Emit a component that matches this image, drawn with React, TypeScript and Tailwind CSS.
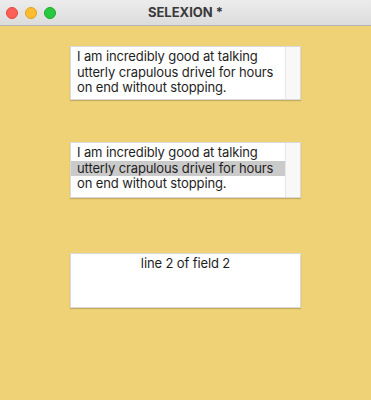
import React from "react";

const font = { fontFamily: "Inter, 'Noto Sans', sans-serif" };

function Field({
  lines,
  highlight,
  scroll,
  center,
  h,
}: {
  lines: string[];
  highlight?: number;
  scroll?: boolean;
  center?: boolean;
  h: string;
}) {
  return (
    <div
      className={`ml-[70px] w-[231px] ${h} bg-white border border-[#d9d9d9] shadow-[0_1px_1px_rgba(0,0,0,0.18)] flex`}
    >
      <div className="flex-1 pt-[2px] flex flex-col">
        {lines.map((l, i) => (
          <div
            key={i}
            className={`h-[15.5px] leading-[15.5px] text-[13px] tracking-[-0.12px] text-[#1e1e1e] whitespace-nowrap ${
              center ? "text-center" : "pl-[6px]"
            } ${highlight === i ? "bg-[#cacaca]" : ""}`}
          >
            {l}
          </div>
        ))}
      </div>
      {scroll && <div className="w-[15px] h-full bg-[#f8f8f8] border-l border-[#e6e6e6]" />}
    </div>
  );
}

export default function App() {
  const text = [
    "I am incredibly good at talking",
    "utterly crapulous drivel for hours",
    "on end without stopping.",
  ];
  return (
    <div className="w-[371px] h-[400px] bg-[#f0d276] flex flex-col overflow-hidden" style={font}>
      <div className="h-[26px] shrink-0 bg-gradient-to-b from-[#ececec] to-[#dcdcdc] border-b border-[#b4b4b4] flex items-center relative">
        <div className="flex items-center gap-[7px] pl-[6px]">
          <div className="w-[12px] h-[12px] rounded-full bg-[#fe5f57] border border-[#e2463f]" />
          <div className="w-[12px] h-[12px] rounded-full bg-[#febc2e] border border-[#dea123]" />
          <div className="w-[12px] h-[12px] rounded-full bg-[#28c840] border border-[#1aab29]" />
        </div>
        <div className="absolute inset-0 flex items-center justify-center text-[13px] font-bold text-[#3a3a3a]">
          SELEXION *
        </div>
      </div>
      <div className="pt-[20px] flex flex-col">
        <Field lines={text} scroll h="h-[54px]" />
        <div className="h-[42px]" />
        <Field lines={text} scroll highlight={1} h="h-[56px]" />
        <div className="h-[55px]" />
        <Field lines={["line 2 of field 2"]} center h="h-[55px]" />
      </div>
    </div>
  );
}
